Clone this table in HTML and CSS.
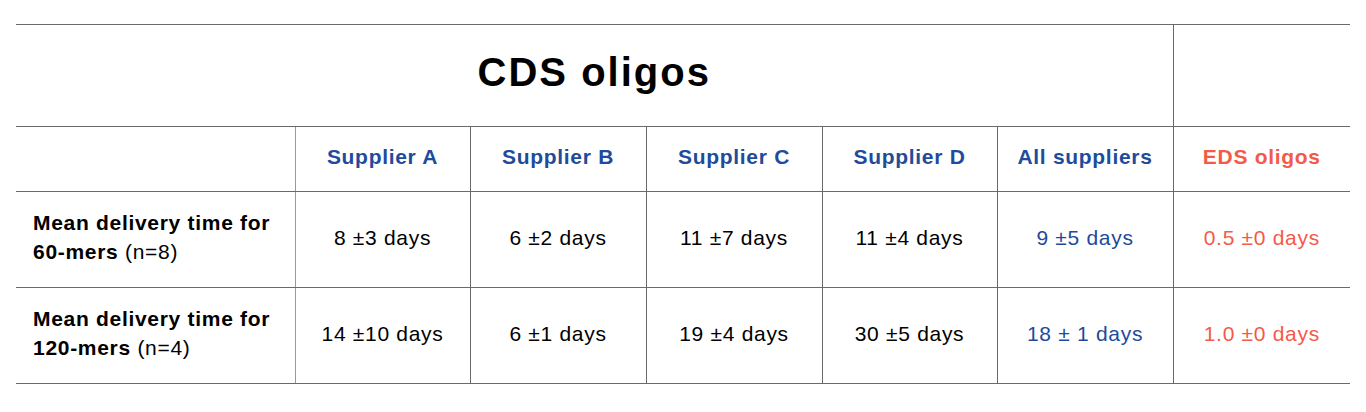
FILE: index.html
```html
<!DOCTYPE html>
<html lang="en">
<head>
<meta charset="utf-8">
<title>CDS oligos</title>
<link rel="stylesheet" href="styles.css">
</head>
<body>
<table class="grid">
  <colgroup>
    <col class="c-label">
    <col class="c-a"><col class="c-b"><col class="c-c"><col class="c-d"><col class="c-all"><col class="c-eds">
  </colgroup>
  <tr class="r-title">
    <td class="title" colspan="6">CDS oligos</td>
    <td class="sep"></td>
  </tr>
  <tr class="r-head">
    <td></td>
    <td class="head blue first">Supplier A</td>
    <td class="head blue">Supplier B</td>
    <td class="head blue">Supplier C</td>
    <td class="head blue">Supplier D</td>
    <td class="head blue">All suppliers</td>
    <td class="head red">EDS oligos</td>
  </tr>
  <tr class="r-data">
    <td class="label"><b>Mean delivery time for<br>60-mers</b> (n=8)</td>
    <td class="val first">8 ±3 days</td>
    <td class="val">6 ±2 days</td>
    <td class="val">11 ±7 days</td>
    <td class="val">11 ±4 days</td>
    <td class="val blue">9 ±5 days</td>
    <td class="val red">0.5 ±0 days</td>
  </tr>
  <tr class="r-data">
    <td class="label"><b>Mean delivery time for<br>120-mers</b> (n=4)</td>
    <td class="val first">14 ±10 days</td>
    <td class="val">6 ±1 days</td>
    <td class="val">19 ±4 days</td>
    <td class="val">30 ±5 days</td>
    <td class="val blue">18 ± 1 days</td>
    <td class="val red">1.0 ±0 days</td>
  </tr>
</table>
</body>
</html>
```
FILE: styles.css
```css
html, body {
  margin: 0;
  padding: 0;
  background: #ffffff;
}
body {
  padding: 24px 16px 0 16px;
  font-family: "Liberation Sans", Arial, Helvetica, sans-serif;
  color: #000000;
}
.grid {
  border-collapse: collapse;
  table-layout: fixed;
  width: 1334px;
}
.c-label { width: 279px; }
.c-a { width: 175px; }
.c-b { width: 176px; }
.c-c { width: 176px; }
.c-d { width: 175px; }
.c-all { width: 176px; }
.c-eds { width: 177px; }
.grid td {
  border-top: 1px solid #6a6a6a;
  border-bottom: 1px solid #6a6a6a;
  padding: 0;
  font-size: 21px;
  letter-spacing: 0.7px;
  text-align: center;
  vertical-align: middle;
}
.grid td + td {
  border-left: 1px solid #6a6a6a;
}
.grid td.first {
  border-left: 1px solid #9a9a9a;
}
.r-title td { height: 101px; }
.r-title td.title {
  height: 94px;
  font-size: 40px;
  font-weight: bold;
  letter-spacing: 2px;
  padding-bottom: 7px;
  border-left: none;
}
.r-head td { height: 64px; }
.r-head td.head { padding-bottom: 4px; height: 60px; }
.r-data td { height: 95px; }
.r-data td.val { padding-bottom: 3px; height: 92px; }
.head {
  font-weight: bold;
}
.label {
  text-align: left !important;
  padding-left: 17px !important;
  padding-bottom: 6px !important;
  height: 89px !important;
  line-height: 29px;
}
.label b { font-weight: bold; }
.blue { color: #1e4b9b; }
.red { color: #f35a48; }
```
